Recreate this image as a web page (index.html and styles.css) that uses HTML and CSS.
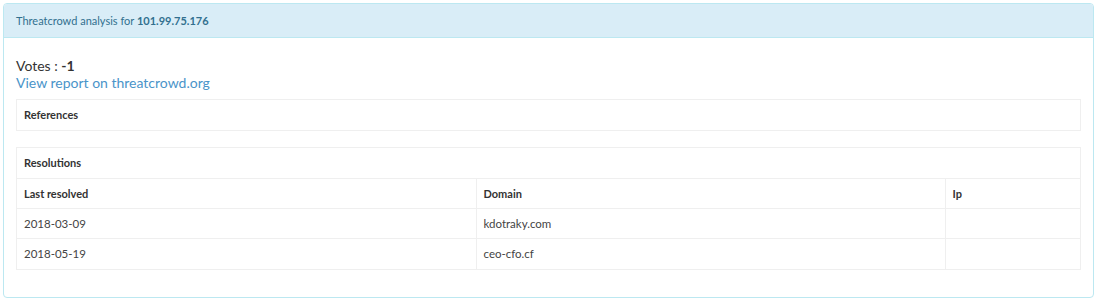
FILE: index.html
```html
<!DOCTYPE html>
<html lang="en">
<head>
  <meta charset="UTF-8" />
  <title>Threatcrowd analysis</title>
  <link rel="stylesheet" href="styles.css">
</head>
<body>
  <div class="panel">
    <div class="panel-heading">
      Threatcrowd analysis for <b>101.99.75.176</b>
    </div>
    <div class="panel-body">
      <div class="votes">Votes : <b>-1</b></div>
      <a class="report-link" href="#">View report on threatcrowd.org</a>

      <div class="box">
        <div class="box-title">References</div>
      </div>

      <div class="box">
        <div class="box-title">Resolutions</div>
        <table>
          <thead>
            <tr>
              <th class="col-date">Last resolved</th>
              <th class="col-domain">Domain</th>
              <th>Ip</th>
            </tr>
          </thead>
          <tbody>
            <tr>
              <td>2018-03-09</td>
              <td>kdotraky.com</td>
              <td></td>
            </tr>
            <tr>
              <td>2018-05-19</td>
              <td>ceo-cfo.cf</td>
              <td></td>
            </tr>
          </tbody>
        </table>
      </div>
    </div>
  </div>
</body>
</html>
```

FILE: styles.css
```css
* {
  margin: 0;
  padding: 0;
  box-sizing: border-box;
}

body {
  font-family: Lato, 'Open Sans', sans-serif;
  background: #fff;
  color: #333;
  padding: 3px 3px 3px 3px;
}

.panel {
  border: 1px solid #bce8f1;
  border-radius: 4px;
  width: 1091px;
  height: 295px;
}

.panel-heading {
  background-color: #d9edf7;
  color: #31708f;
  border-bottom: 1px solid #bce8f1;
  height: 34px;
  padding: 0 12px;
  font-size: 11px;
  line-height: 33px;
  border-radius: 3px 3px 0 0;
}

.panel-heading b {
  font-weight: 700;
}

.panel-body {
  padding: 19px 12px 0 12px;
}

.votes {
  font-size: 14px;
  line-height: 17px;
}

.report-link {
  display: block;
  font-size: 14px;
  line-height: 17px;
  color: #4a94c9;
  text-decoration: none;
  margin-bottom: 8px;
}

.box {
  border: 1px solid #efefef;
  margin-bottom: 16px;
}

.box-title {
  height: 30px;
  line-height: 30px;
  padding: 0 7px;
  font-size: 11px;
  font-weight: 700;
}

table {
  width: 100%;
  border-collapse: collapse;
  font-size: 11.5px;
}

th,
td {
  border-top: 1px solid #efefef;
  height: 30px;
  padding: 0 7px;
  text-align: left;
  color: #444;
}

th {
  font-size: 11px;
  font-weight: 700;
  color: #333;
}

th + th,
td + td {
  border-left: 1px solid #efefef;
}

.col-date {
  width: 459px;
}

.col-domain {
  width: 469px;
}
```
